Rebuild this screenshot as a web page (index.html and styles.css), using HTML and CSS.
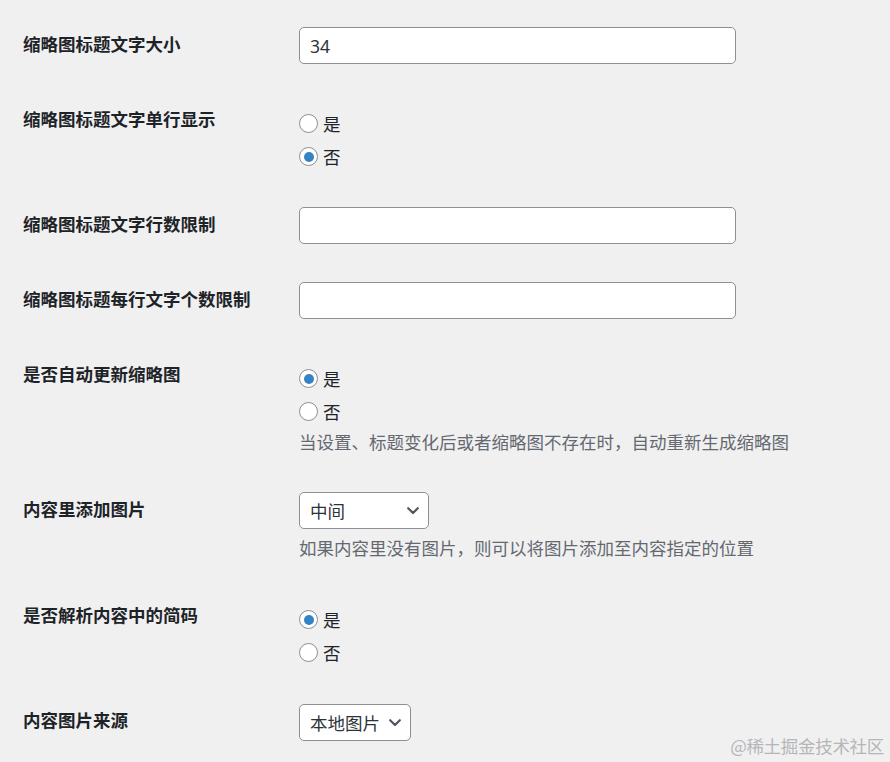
FILE: index.html
```html
<!DOCTYPE html>
<html lang="zh-CN">
<head>
<meta charset="utf-8">
<title>缩略图设置</title>
<link rel="stylesheet" href="styles.css">
</head>
<body>
<div class="form-table">
  <div class="row">
    <div class="th">缩略图标题文字大小</div>
    <div class="td">
      <input class="regular-text" type="text" value="34">
    </div>
  </div>

  <div class="row">
    <div class="th">缩略图标题文字单行显示</div>
    <div class="td td-radios">
      <label class="option"><input type="radio" name="single"><span>是</span></label>
      <label class="option"><input type="radio" name="single" checked><span>否</span></label>
    </div>
  </div>

  <div class="row">
    <div class="th">缩略图标题文字行数限制</div>
    <div class="td">
      <input class="regular-text" type="text" value="">
    </div>
  </div>

  <div class="row">
    <div class="th">缩略图标题每行文字个数限制</div>
    <div class="td">
      <input class="regular-text" type="text" value="">
    </div>
  </div>

  <div class="row">
    <div class="th">是否自动更新缩略图</div>
    <div class="td td-radios td-radios-desc">
      <label class="option"><input type="radio" name="auto" checked><span>是</span></label>
      <label class="option"><input type="radio" name="auto"><span>否</span></label>
      <p class="description desc-after-radio">当设置、标题变化后或者缩略图不存在时，自动重新生成缩略图</p>
    </div>
  </div>

  <div class="row">
    <div class="th">内容里添加图片</div>
    <div class="td td-select-desc">
      <div class="select-wrap">
        <select class="select select-wide">
          <option>中间</option>
          <option>开头</option>
          <option>结尾</option>
        </select>
        <svg class="chevron" viewBox="0 0 12 8" width="12" height="8"><path d="M1.2 1.2 L6 6 L10.8 1.2" fill="none" stroke="#50575e" stroke-width="2.2" stroke-linecap="round" stroke-linejoin="round"/></svg>
      </div>
      <p class="description desc-after-select">如果内容里没有图片，则可以将图片添加至内容指定的位置</p>
    </div>
  </div>

  <div class="row">
    <div class="th">是否解析内容中的简码</div>
    <div class="td td-radios">
      <label class="option"><input type="radio" name="shortcode" checked><span>是</span></label>
      <label class="option"><input type="radio" name="shortcode"><span>否</span></label>
    </div>
  </div>

  <div class="row">
    <div class="th">内容图片来源</div>
    <div class="td td-last">
      <div class="select-wrap">
        <select class="select">
          <option>本地图片</option>
        </select>
        <svg class="chevron" viewBox="0 0 12 8" width="12" height="8"><path d="M1.2 1.2 L6 6 L10.8 1.2" fill="none" stroke="#50575e" stroke-width="2.2" stroke-linecap="round" stroke-linejoin="round"/></svg>
      </div>
    </div>
  </div>
</div>

<div class="watermark">@稀土掘金技术社区</div>
</body>
</html>
```

FILE: styles.css
```css
html, body {
  margin: 0;
  padding: 0;
}

body {
  background: #f0f0f1;
  font-family: "Noto Sans CJK SC", "Noto Sans", sans-serif;
  font-size: 17.5px;
  color: #1d2327;
  width: 890px;
  height: 762px;
  overflow: hidden;
  position: relative;
}

.form-table {
  padding: 8px 0 0 23px;
}

.row {
  display: flex;
}

.th {
  flex: none;
  width: 276px;
  padding-top: 24px;
  line-height: 23px;
  font-weight: 700;
  color: #1d2327;
}

.td {
  flex: 1;
  padding: 19px 0;
}

.td-radios {
  padding: 24px 0 15px;
}

.td-radios-desc {
  padding-bottom: 18px;
}

.td-select-desc {
  padding: 19px 0 19px;
}

.td-last {
  padding-top: 20px;
}

.regular-text {
  display: block;
  box-sizing: border-box;
  width: 437px;
  height: 37px;
  margin: 0;
  padding: 0 10px;
  border: 1px solid #8c8f94;
  border-radius: 5px;
  background: #fff;
  font-family: "Noto Sans", "Noto Sans CJK SC", sans-serif;
  font-size: 17.5px;
  color: #2c3338;
  outline: none;
}

.option {
  display: flex;
  align-items: center;
  height: 33px;
  gap: 5px;
  line-height: 1;
}

.option input {
  appearance: none;
  -webkit-appearance: none;
  box-sizing: border-box;
  flex: none;
  width: 19px;
  height: 19px;
  margin: 0;
  border: 1px solid #8c8f94;
  border-radius: 50%;
  background: #fff;
  display: flex;
  align-items: center;
  justify-content: center;
}

.option input:checked::before {
  content: "";
  width: 10px;
  height: 10px;
  border-radius: 50%;
  background: #3582c4;
}

.option span {
  color: #1d2327;
}

.description {
  margin: 0;
  color: #646970;
}

.desc-after-radio {
  margin-top: 1px;
  line-height: 26px;
}

.desc-after-select {
  margin-top: 7px;
  line-height: 24px;
}

.select-wrap {
  position: relative;
  display: inline-block;
  vertical-align: top;
}

.select {
  appearance: none;
  -webkit-appearance: none;
  box-sizing: border-box;
  display: block;
  height: 37px;
  margin: 0;
  padding: 0 30px 0 10px;
  border: 1px solid #8c8f94;
  border-radius: 5px;
  background: #fff;
  font-family: "Noto Sans CJK SC", sans-serif;
  font-size: 17.5px;
  color: #2c3338;
  outline: none;
}

.select-wide {
  width: 130px;
}

.chevron {
  position: absolute;
  right: 10px;
  top: 15px;
  pointer-events: none;
}

.watermark {
  position: absolute;
  right: 6px;
  bottom: 4px;
  line-height: 24px;
  font-size: 17.5px;
  color: #b6b6b8;
  letter-spacing: -0.3px;
}
```
